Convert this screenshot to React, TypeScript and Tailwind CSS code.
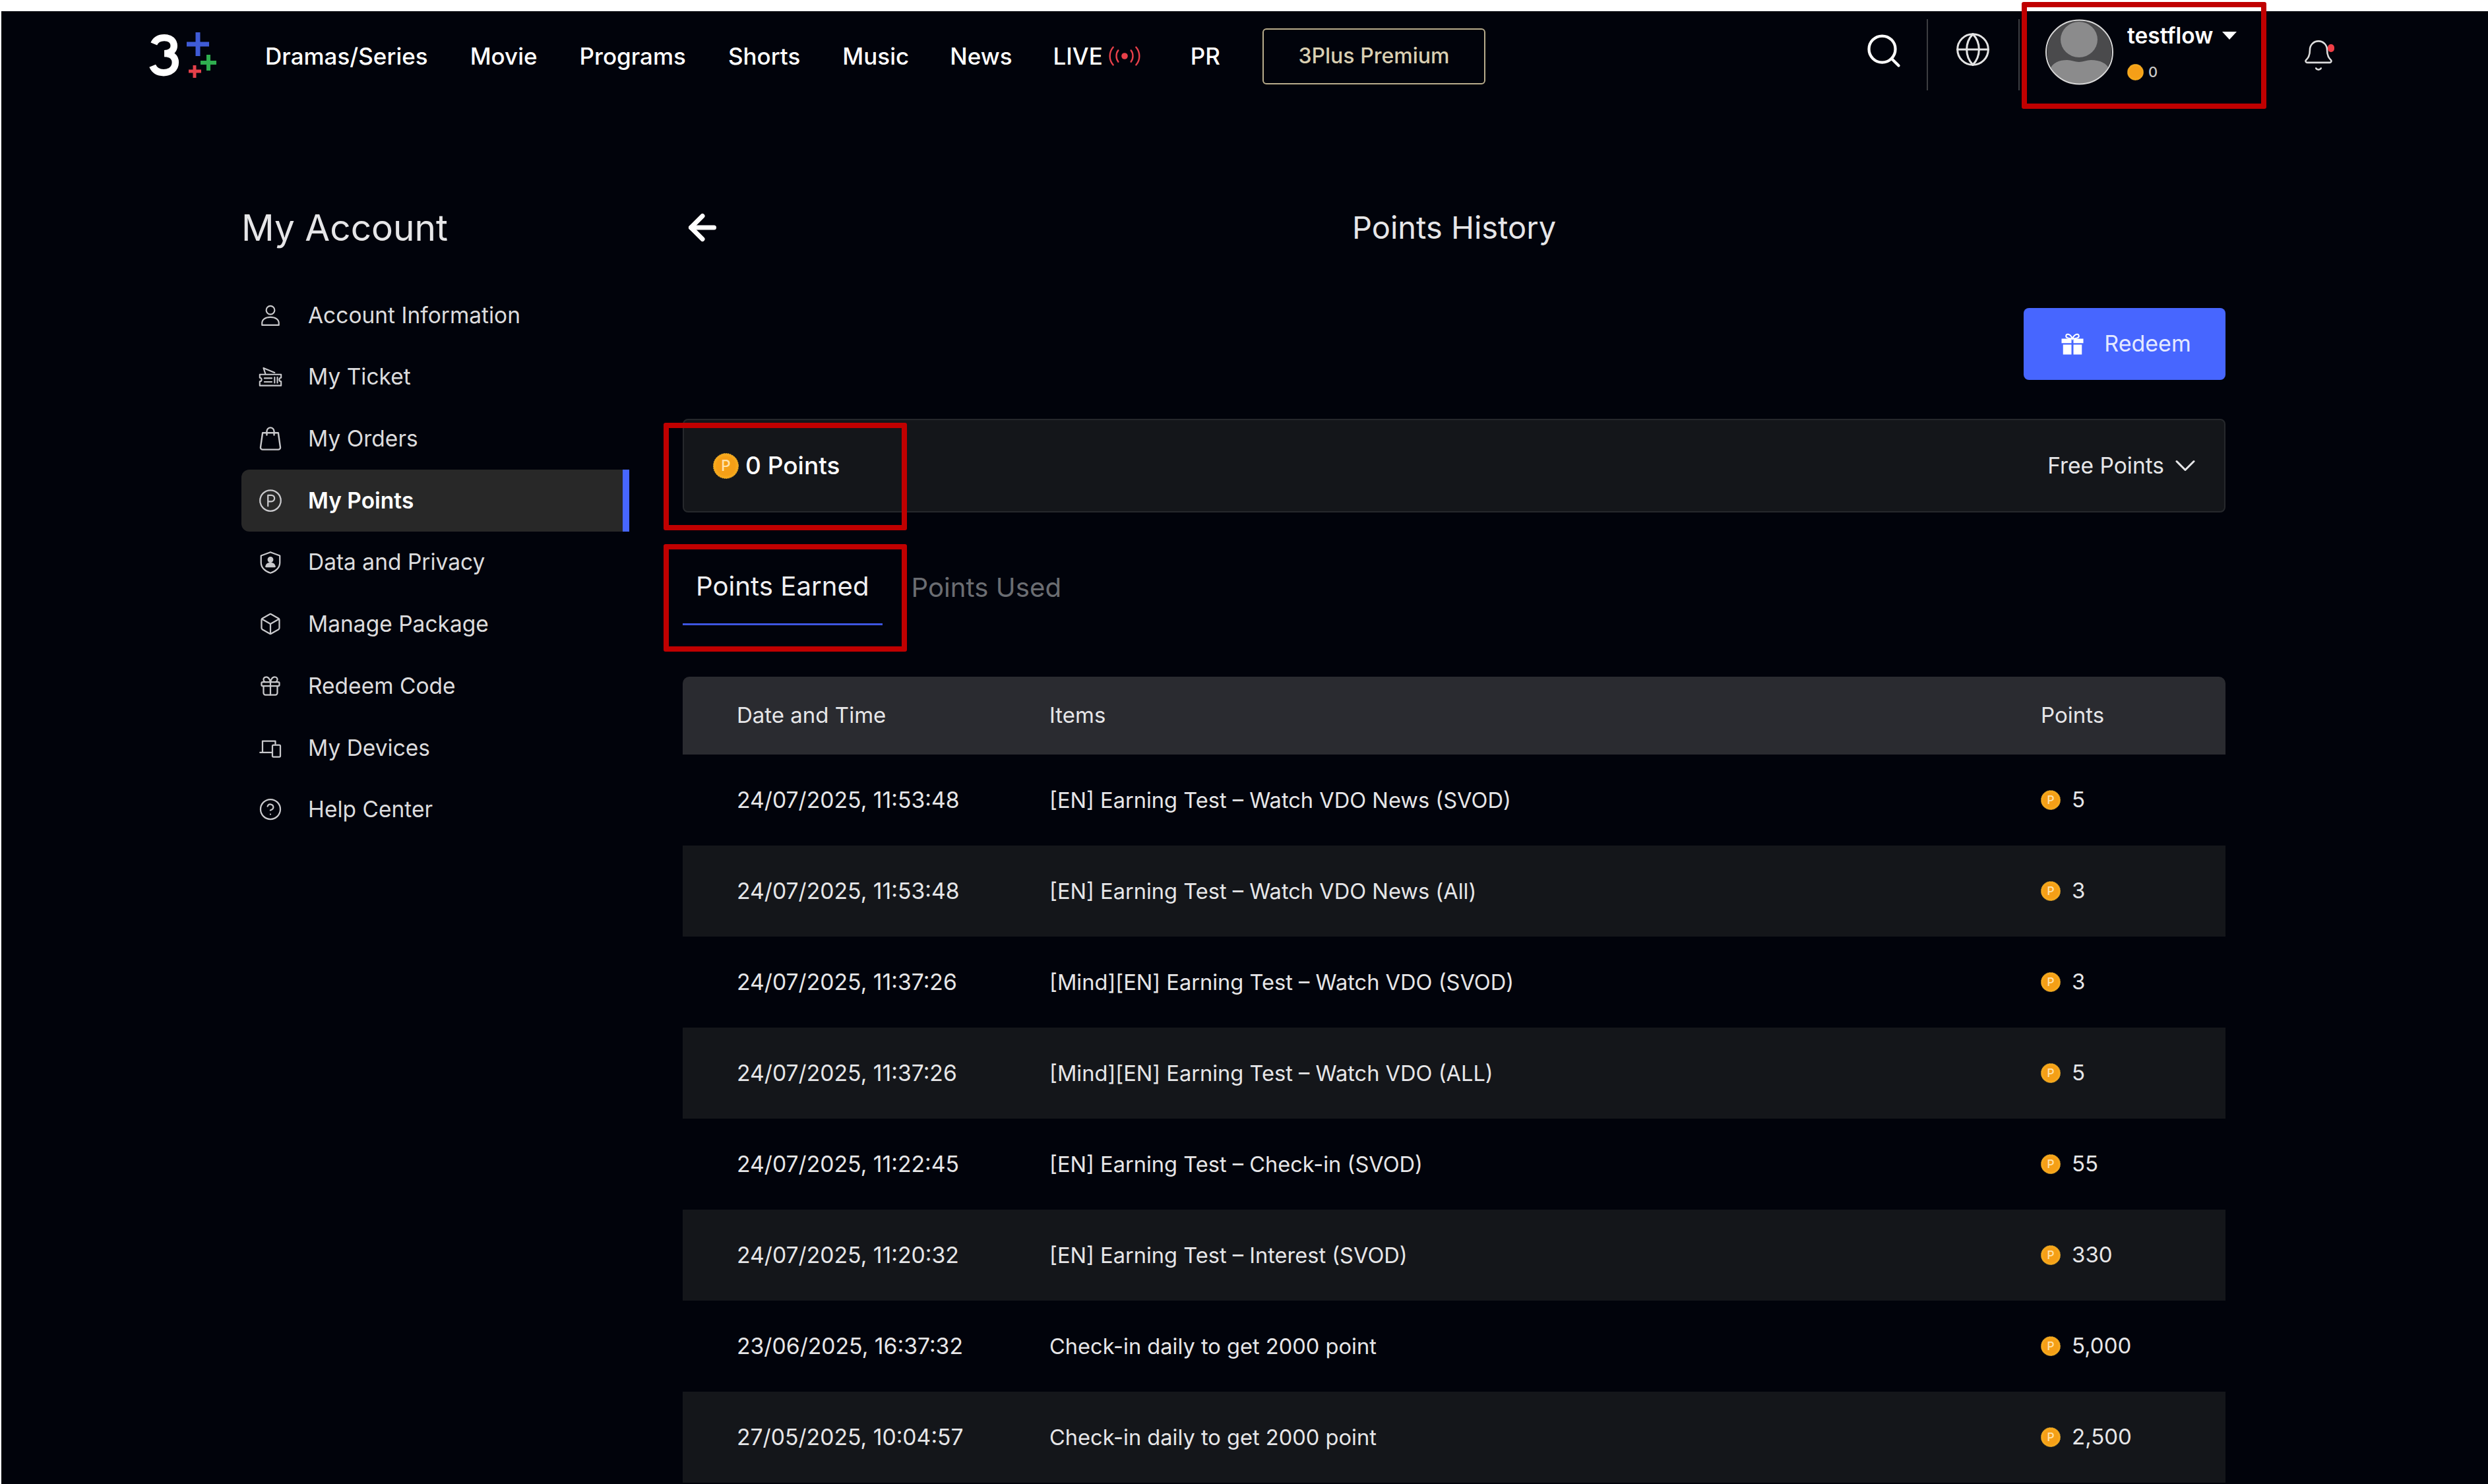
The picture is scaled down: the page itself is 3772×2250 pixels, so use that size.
import React from "react";
import { Box, Gift, CircleHelp, ChevronDown, ArrowLeft, Search, Globe, Bell } from "lucide-react";

const font = "[font-family:Inter,'Liberation_Sans',sans-serif]";

function Coin({ size, label = true }: { size: number; label?: boolean }) {
  return (
    <svg width={size} height={size} viewBox="0 0 40 40" className="shrink-0">
      <circle cx="20" cy="20" r="19.5" fill="#f6a81c" stroke="#e8b23a" strokeDasharray="2 1.5" />
      <circle cx="20" cy="20" r="15.5" fill="#f59f17" />
      {label && (
        <text x="20" y="28" textAnchor="middle" fontSize="23" fontFamily="Inter, sans-serif" fontWeight="500" fill="#ffe3ae">
          P
        </text>
      )}
    </svg>
  );
}

const ico = { fill: "none", stroke: "#c9c9cc", strokeWidth: 1.5, strokeLinecap: "round" as const, strokeLinejoin: "round" as const };

const PersonIcon = () => (
  <svg width="34" height="34" viewBox="0 0 24 24" {...ico}>
    <circle cx="12" cy="6.500" r="4.500" />
    <path d="M3 22.500v-2c0-4 3.500-6.500 9-6.500s9 2.500 9 6.500v2z" />
  </svg>
);
const TicketIcon = () => (
  <svg width="38" height="34" viewBox="0 0 27 24" {...ico}>
    <path d="M8 8 6 2l12 5" />
    <path d="M2 9h23v3.500a2 2 0 0 0 0 4V21H2v-4.500a2 2 0 0 0 0-4z" />
    <path d="M7 13h8M7 17h8M18 12v6M21 12v6" />
  </svg>
);
const BagIcon = () => (
  <svg width="38" height="38" viewBox="0 0 24 24" {...ico}>
    <path d="M4.500 6.500h15l2 14a2 2 0 0 1-2 2h-15a2 2 0 0 1-2-2z" />
    <path d="M8.500 8.500V5a3.500 3.500 0 0 1 7 0v3.500" />
  </svg>
);
const PIcon = () => (
  <svg width="36" height="36" viewBox="0 0 24 24" {...ico}>
    <circle cx="12" cy="12" r="10.500" />
    <path d="M9.500 17.500v-11h3.400a3.200 3.200 0 0 1 0 6.400H9.500" />
  </svg>
);
const ShieldIcon = () => (
  <svg width="36" height="36" viewBox="0 0 24 24" {...ico}>
    <path d="M12 1.500 21.500 5v7c0 5-4 9-9.500 10.500C6.500 21 2.500 17 2.500 12V5z" />
    <circle cx="12" cy="9" r="2.200" fill="#c9c9cc" />
    <path d="M7.500 16c.5-2.500 2.300-3.500 4.500-3.500s4 1 4.500 3.500z" fill="#c9c9cc" />
  </svg>
);
const DevicesIcon = () => (
  <svg width="36" height="36" viewBox="0 0 24 24" {...ico}>
    <path d="M4 16V5h13v3" />
    <path d="M1.500 16.500H13" />
    <rect x="14" y="9" width="8" height="12" rx="1" />
  </svg>
);
const SolidGift = () => (
  <svg width="36" height="36" viewBox="0 0 24 24" className="shrink-0">
    <path d="M12 7C10 2 6 1.500 5.500 4 5 6 8 7 12 7c4 0 7-1 6.500-3C18 1.500 14 2 12 7z" fill="none" stroke="#fff" strokeWidth="1.400" />
    <path d="M1 7h10v4.500H1zM13 7h10v4.500H13zM2.500 13H11v10H2.500zM13 13h8.500v10H13z" fill="#fff" />
  </svg>
);

const LiveIcon = () => (
  <svg width="50" height="34" viewBox="0 0 52 34" fill="none" stroke="#e8404a" strokeWidth="2.500" strokeLinecap="round" className="shrink-0">
    <circle cx="26" cy="17" r="5" fill="#e8404a" stroke="none" />
    <path d="M16 8c-4 5-4 13 0 18M36 8c4 5 4 13 0 18" />
    <path d="M8 3C1 11 1 23 8 31M44 3c7 8 7 20 0 28" />
  </svg>
);

const Logo = () => (
  <svg width="110" height="72" viewBox="0 0 110 72" fill="none" className="shrink-0">
    <path d="M6 13C9 6 15 4 21 4c9 0 14 5 14 12 0 6-5 11-14 11 10 0 16 5 16 13 0 9-7 15-17 15-8 0-13-3-16-10" transform="translate(2 5) scale(1.05 1.04)" stroke="#fff" strokeWidth="10" />
    <path d="M75 1v36M58 19h34" stroke="#3f5bd6" strokeWidth="7" />
    <path d="M91 35v24M79 47h24" stroke="#2fae4f" strokeWidth="6" />
    <path d="M70 51v19M61 60h19" stroke="#e5404a" strokeWidth="5" />
  </svg>
);

const Avatar = () => (
  <svg width="105" height="100" viewBox="0 0 105 100" className="shrink-0">
    <defs>
      <clipPath id="av"><circle cx="52.500" cy="50" r="49" /></clipPath>
    </defs>
    <g clipPath="url(#av)">
      <rect width="105" height="100" fill="#4a4a4c" />
      <ellipse cx="52" cy="31" rx="28" ry="27" fill="#8b8b8c" />
      <path d="M8 100V76c4-10 14-14 26-14 6 0 12 3 18 3s12-3 18-3c14 0 24 5 28 14v24z" fill="#8b8b8c" />
    </g>
    <ellipse cx="52.500" cy="50" rx="50.500" ry="48.500" fill="none" stroke="#d8d8d8" strokeWidth="2" />
  </svg>
);

const nav: [string, string][] = [
  ["Dramas/Series", "ml-[67px]"],
  ["Movie", "ml-[64px]"],
  ["Programs", "ml-[64px]"],
  ["Shorts", "ml-[64px]"],
  ["Music", "ml-[64px]"],
  ["News", "ml-[62px]"],
];

const side: [string, React.ReactNode][] = [
  ["Account Information", <PersonIcon />],
  ["My Ticket", <TicketIcon />],
  ["My Orders", <BagIcon />],
  ["My Points", <PIcon />],
  ["Data and Privacy", <ShieldIcon />],
  ["Manage Package", <Box size={36} color="#c9c9cc" strokeWidth={1.5} />],
  ["Redeem Code", <Gift size={36} color="#c9c9cc" strokeWidth={1.5} />],
  ["My Devices", <DevicesIcon />],
  ["Help Center", <CircleHelp size={36} color="#c9c9cc" strokeWidth={1.5} />],
];

const rows: [string, string, string][] = [
  ["24/07/2025, 11:53:48", "[EN] Earning Test \u2013 Watch VDO News (SVOD)", "5"],
  ["24/07/2025, 11:53:48", "[EN] Earning Test \u2013 Watch VDO News (All)", "3"],
  ["24/07/2025, 11:37:26", "[Mind][EN] Earning Test \u2013 Watch VDO (SVOD)", "3"],
  ["24/07/2025, 11:37:26", "[Mind][EN] Earning Test \u2013 Watch VDO (ALL)", "5"],
  ["24/07/2025, 11:22:45", "[EN] Earning Test \u2013 Check-in (SVOD)", "55"],
  ["24/07/2025, 11:20:32", "[EN] Earning Test \u2013 Interest (SVOD)", "330"],
  ["23/06/2025, 16:37:32", "Check-in daily to get 2000 point", "5,000"],
  ["27/05/2025, 10:04:57", "Check-in daily to get 2000 point", "2,500"],
];

export default function App() {
  return (
    <div className={`relative h-[2250px] w-[3772px] overflow-hidden bg-white pl-[2px] pt-[17px] text-[#e6e6e8] ${font}`}>
      <div className="h-[2233px] bg-[#01030b]">
        {/* header */}
        <header className="flex h-[136px] items-center pl-[223px] pr-[231px] text-[35px] font-medium text-white">
          <div className="-mt-[3px]"><Logo /></div>
          {nav.map(([t, c]) => (
            <span key={t} className={`${c} whitespace-nowrap`}>{t}</span>
          ))}
          <span className="ml-[62px] flex items-center gap-[8px] whitespace-nowrap">LIVE <LiveIcon /></span>
          <span className="ml-[75px]">PR</span>
          <div className="ml-[64px] flex h-[85px] w-[338px] items-center justify-center rounded-[6px] border-2 border-[#b9ad8c] text-[32px] text-[#d9cfb2]">
            3Plus Premium
          </div>
          <div className="ml-auto flex items-center">
            <Search size={60} color="#fff" strokeWidth={1.7} className="-mt-[17px]" />
            <div className="ml-[35px] -mt-[4px] h-[108px] w-[2px] bg-[#3c3d41]" />
            <Globe size={56} color="#e4e4e4" strokeWidth={1.3} className="ml-[40px] -mt-[20px]" />
            <div className="ml-[41px] -mt-[4px] h-[108px] w-[2px] bg-[#3c3d41]" />
            <div className="ml-[38px] -mt-[13px]"><Avatar /></div>
            <div className="ml-[20px] -mt-[14px] flex w-[170px] flex-col">
              <div className="flex items-center gap-[14px] text-[33.500px] font-semibold leading-[40px]">
                testflow
                <span className="h-0 w-0 border-x-[11px] border-t-[12px] border-x-transparent border-t-white" />
              </div>
              <div className="mt-[22px] flex items-center gap-[7px] text-[22px] leading-[26px] text-[#c9c9c9]">
                <Coin size={25} label={false} /> 0
              </div>
            </div>
            <div className="relative ml-[94px] -mt-[2px]">
              <Bell size={52} color="#dcdcdc" strokeWidth={1.2} />
              <span className="absolute right-[2px] top-[9px] h-[12px] w-[10px] rounded-full bg-[#ef3e46]" />
            </div>
          </div>
        </header>

        {/* body */}
        <div className="flex pl-[364px] pt-[157px]">
          <aside className="w-[588px] shrink-0">
            <h2 className="text-[55px] font-normal leading-[70px]">My Account</h2>
            <nav className="mt-[51px]">
              {side.map(([t, icon]) => {
                const on = t === "My Points";
                return (
                  <div
                    key={t}
                    className={`flex h-[93.700px] items-center text-[33.500px] ${on ? "rounded-l-[12px] border-r-[10px] border-[#4766ff] bg-[#282828] font-semibold text-white" : "text-[#dcdcde]"}`}
                  >
                    <span className="flex w-[88px] justify-center">{icon}</span>
                    <span className="ml-[13px]">{t}</span>
                  </div>
                );
              })}
            </nav>
          </aside>

          <main className="ml-[81px] w-[2339px] shrink-0">
            <div className="grid h-[70px] grid-cols-[1fr_auto_1fr] items-center">
              <ArrowLeft size={60} color="#fff" strokeWidth={2.800} />
              <h1 className="text-[47px] font-normal">Points History</h1>
              <span />
            </div>

            <div className="mt-[87px] flex justify-end">
              <button className="flex h-[109px] w-[306px] items-center justify-center gap-[30px] rounded-[8px] bg-[#4766ff] pb-[2px] pl-[4px] text-[34px] text-[#e4e9ff]">
                <SolidGift /> Redeem
              </button>
            </div>

            <div className="mt-[59px] flex h-[142px] items-center justify-between rounded-[8px] border-2 border-[#26282c] bg-[#14161a] pl-[44px] pr-[33px]">
              <div className="flex items-center gap-[10px] text-[37px] font-medium text-white">
                <Coin size={39} /> 0 Points
              </div>
              <div className="flex items-center gap-[6px] text-[33.500px]">
                Free Points <ChevronDown size={52} strokeWidth={1.4} />
              </div>
            </div>

            <div className="mt-[51px] flex h-[120px] text-[40.200px]">
              <div className="flex items-center border-b-[3px] border-[#3d55e0] px-[20px] pt-[6px] text-[#f0f0f2]">Points Earned</div>
              <div className="ml-[22px] flex items-center px-[22px] pt-[6px] text-[#6b6d72]">Points Used</div>
            </div>

            <div className="mt-[78px] text-[33px]">
              <div className="flex h-[118px] items-center rounded-t-[10px] bg-[#2a2b30]">
                <span className="ml-[82px] w-[474px]">Date and Time</span>
                <span className="w-[1503px]">Items</span>
                <span>Points</span>
              </div>
              {rows.map(([d, t, p], i) => (
                <div key={i} className={`flex h-[138px] items-center ${i % 2 === 1 ? "bg-[#14161a]" : ""}`}>
                  <span className="ml-[82px] w-[474px] text-[33.700px]">{d}</span>
                  <span className="w-[1503px] text-[32.600px]">{t}</span>
                  <span className="flex items-center gap-[17px]"><Coin size={30} />{p}</span>
                </div>
              ))}
            </div>
          </main>
        </div>
      </div>

      {/* reviewer's red annotation boxes */}
      <div className="absolute left-[3065px] top-[3px] h-[162px] w-[371px] rounded-[3px] border-[8px] border-[#c00000]" />
      <div className="absolute left-[1006px] top-[641px] h-[163px] w-[369px] rounded-[3px] border-[8px] border-[#c00000]" />
      <div className="absolute left-[1006px] top-[825px] h-[163px] w-[369px] rounded-[3px] border-[8px] border-[#c00000]" />
    </div>
  );
}
